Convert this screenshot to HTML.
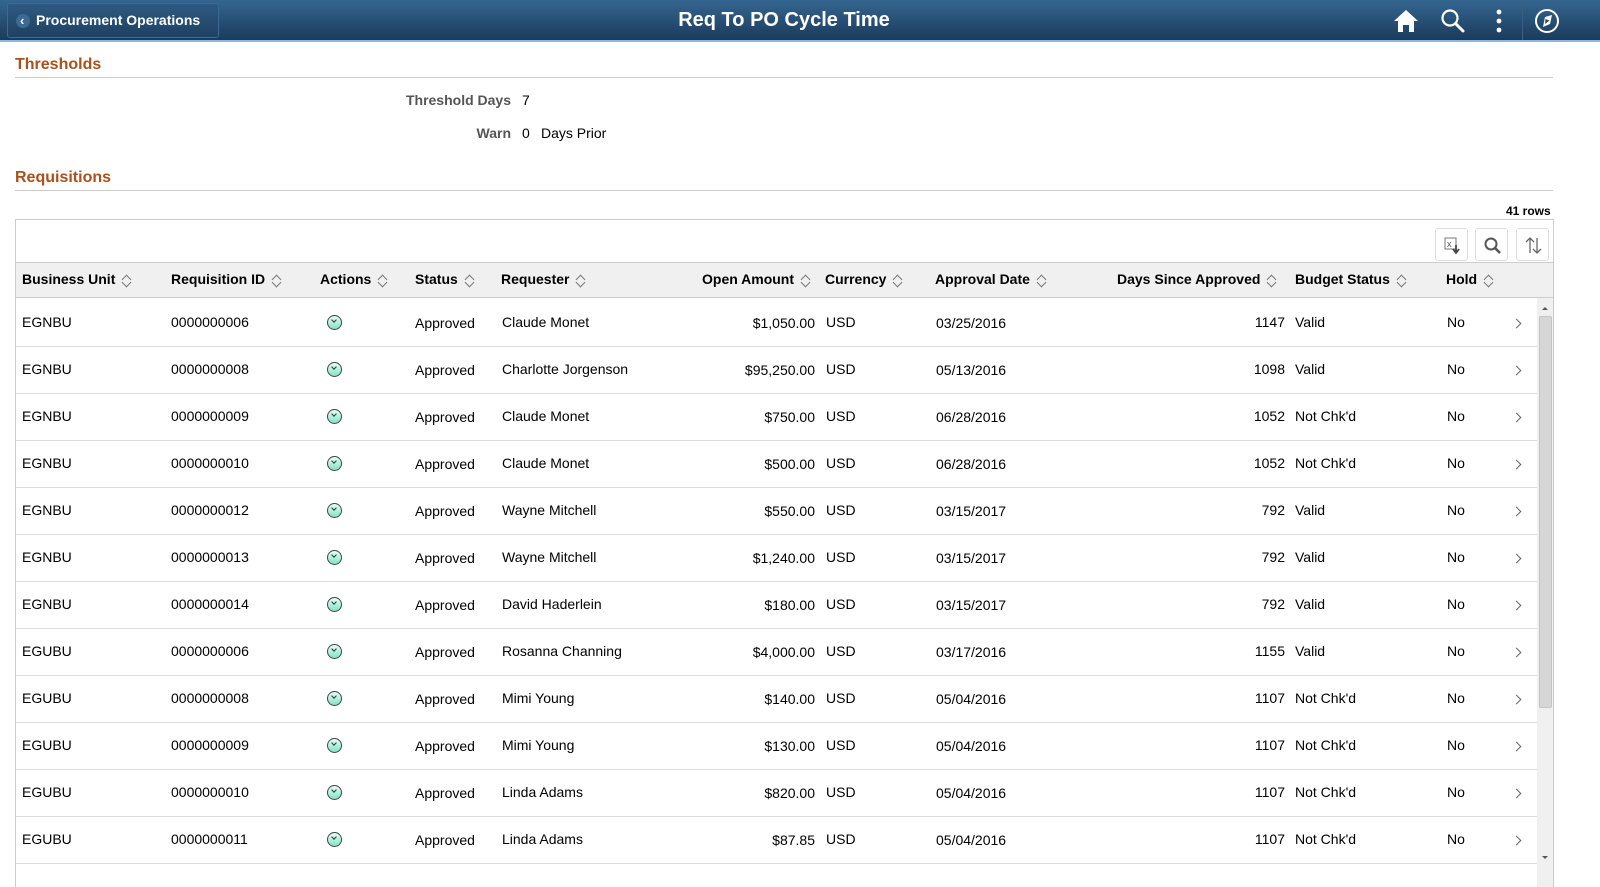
<!DOCTYPE html>
<html><head><meta charset="utf-8">
<style>
*{box-sizing:border-box;margin:0;padding:0}
body{width:1600px;height:887px;overflow:hidden;background:#fff;font-family:"Liberation Sans",Arial,sans-serif;position:relative;color:#000}
.top{position:absolute;left:0;top:0;width:1600px;height:42px;background:linear-gradient(#356690,#1b3b5c);border-bottom:2px solid #8fb8e0}
.back{position:absolute;left:7px;top:3px;width:212px;height:35px;border:1px solid #3a6a95;border-radius:3px;background:linear-gradient(#2e5a82,#1e4163);color:#fff;font-weight:bold;font-size:14px;line-height:33px;padding-left:28px}
.back .c{position:absolute;left:8px;top:10px;width:14px;height:14px;border-radius:50%;background:#3d6a93}
.title{position:absolute;left:0;width:1568px;text-align:center;top:9px;color:#fff;font-weight:bold;font-size:20px}
.sec{position:absolute;left:15px;color:#a9501c;font-weight:bold;font-size:16px}
.hr{position:absolute;left:15px;width:1538px;height:1px;background:#ccc}
.lbl{position:absolute;color:#555;font-weight:bold;font-size:14px;text-align:right}
.val{position:absolute;font-size:14px;color:#000}
.t{position:absolute;font-size:14px;white-space:nowrap}
.th{position:absolute;font-size:14px;font-weight:bold;white-space:nowrap;top:271px}
.srt{display:inline-block;width:7px;height:7px;border:1px solid #777;border-width:1px 0 0 1px;transform:rotate(45deg);margin-left:8px;position:relative;top:-1px}
.srt2{display:inline-block;width:7px;height:7px;border:1px solid #777;border-width:0 1px 1px 0;transform:rotate(45deg);margin-left:-7px;position:relative;top:2px}
.btn{position:absolute;top:228px;width:33px;height:33px;border:1px solid #ddd;border-radius:3px;background:#fff}
.ico{position:absolute;width:15px;height:15px;border-radius:50%;border:1.5px solid #444;background:linear-gradient(#e6fff6,#7fe3c6)}
.ico:after{content:"";position:absolute;left:4px;top:2px;width:3px;height:3px;border:solid #333;border-width:0 1.5px 1.5px 0;transform:rotate(45deg)}
.chev{position:absolute;width:7px;height:7px;border:solid #666;border-width:1.5px 1.5px 0 0;transform:rotate(45deg)}
</style></head><body>
<div class="top">
 <div class="back"><span class="c"></span><span style="position:absolute;left:12px;top:0;font-size:13px">&#8249;</span>Procurement Operations</div>
 <div class="title">Req To PO Cycle Time</div>
 <svg style="position:absolute;left:1393px;top:9px" width="26" height="24" viewBox="0 0 26 24"><path d="M13 1 L25 12 H21 V23 H16 V16 H10 V23 H5 V12 H1 Z" fill="#fff"/></svg>
 <svg style="position:absolute;left:1440px;top:8px" width="26" height="26" viewBox="0 0 26 26"><circle cx="10" cy="10" r="7.5" stroke="#fff" stroke-width="2.2" fill="none"/><path d="M15.5 15.5 L23 23" stroke="#fff" stroke-width="3" stroke-linecap="round"/></svg>
 <svg style="position:absolute;left:1494px;top:9px" width="10" height="24"><circle cx="5" cy="3" r="2.4" fill="#fff"/><circle cx="5" cy="12" r="2.4" fill="#fff"/><circle cx="5" cy="21" r="2.4" fill="#fff"/></svg>
 <div style="position:absolute;left:1522px;top:0;width:46px;height:40px;border-left:1px solid #3b5f82"></div>
 <svg style="position:absolute;left:1534px;top:8px" width="26" height="26" viewBox="0 0 26 26"><circle cx="13" cy="13" r="11" stroke="#fff" stroke-width="2" fill="none"/><path d="M9 19 L11 9 L18 7 L16 16 Z" fill="#fff"/><path d="M11.5 11 L15.5 12.5 L11 16 Z" fill="#254a6f"/></svg>
</div>

<div class="sec" style="top:56px">Thresholds</div>
<div class="hr" style="top:77px"></div>
<div class="lbl" style="left:380px;width:131px;top:92px">Threshold Days</div>
<div class="val" style="left:522px;top:92px">7</div>
<div class="lbl" style="left:380px;width:131px;top:125px">Warn</div>
<div class="val" style="left:522px;top:125px">0</div>
<div class="val" style="left:541px;top:125px">Days Prior</div>

<div class="sec" style="top:169px">Requisitions</div>
<div class="hr" style="top:190px"></div>
<div class="t" style="left:1506px;top:204px;font-size:12px;font-weight:bold">41 rows</div>

<div style="position:absolute;left:15px;top:219px;width:1539px;height:668px;border:1px solid #ccc;border-bottom:none"></div>
<div class="btn" style="left:1435px"><svg width="33" height="33"><rect x="9" y="9" width="11" height="11" fill="none" stroke="#777"/><text x="11" y="18" font-size="9" font-family="Liberation Sans" fill="#555">x</text><path d="M20 16 V23 M17 20 L20 24 L23 20" stroke="#444" stroke-width="1.8" fill="none"/></svg></div>
<div class="btn" style="left:1475px"><svg width="33" height="33"><circle cx="15" cy="15" r="5.5" stroke="#555" stroke-width="2" fill="none"/><path d="M19 19 L24 24" stroke="#555" stroke-width="2.5"/></svg></div>
<div class="btn" style="left:1516px"><svg width="33" height="33"><path d="M13 24 V9 M9 13 L13 9 L17 13 M20 9 V24 M16 20 L20 24 L24 20" stroke="#666" stroke-width="1.3" fill="none"/></svg></div>

<div style="position:absolute;left:16px;top:262px;width:1537px;height:36px;background:#f0f0f0;border-top:1px solid #ccc;border-bottom:1px solid #ccc"></div>
<div class="th" style="left:22px">Business Unit<span class="srt"></span><span class="srt2"></span></div>
<div class="th" style="left:171px">Requisition ID<span class="srt"></span><span class="srt2"></span></div>
<div class="th" style="left:320px">Actions<span class="srt"></span><span class="srt2"></span></div>
<div class="th" style="left:415px">Status<span class="srt"></span><span class="srt2"></span></div>
<div class="th" style="left:501px">Requester<span class="srt"></span><span class="srt2"></span></div>
<div class="th" style="left:702px">Open Amount<span class="srt"></span><span class="srt2"></span></div>
<div class="th" style="left:825px">Currency<span class="srt"></span><span class="srt2"></span></div>
<div class="th" style="left:935px">Approval Date<span class="srt"></span><span class="srt2"></span></div>
<div class="th" style="left:1117px">Days Since Approved<span class="srt"></span><span class="srt2"></span></div>
<div class="th" style="left:1295px">Budget Status<span class="srt"></span><span class="srt2"></span></div>
<div class="th" style="left:1446px">Hold<span class="srt"></span><span class="srt2"></span></div>

<div style="position:absolute;left:1537px;top:298px;width:16px;height:589px;background:#f0f0f0"></div>
<div style="position:absolute;left:1539px;top:316px;width:13px;height:392px;background:#d6d6d6;border:1px solid #c4c4c4;border-radius:2px"></div>
<div style="position:absolute;left:1542px;top:304px;width:0;height:0;border:3px solid transparent;border-bottom-color:#555"></div>
<div style="position:absolute;left:1542px;top:856px;width:0;height:0;border:3px solid transparent;border-top-color:#555"></div>

<div id="rows"></div>
<script>
var d=[["EGNBU","0000000006","Claude Monet","$1,050.00","03/25/2016","1147","Valid"],
["EGNBU","0000000008","Charlotte Jorgenson","$95,250.00","05/13/2016","1098","Valid"],
["EGNBU","0000000009","Claude Monet","$750.00","06/28/2016","1052","Not Chk'd"],
["EGNBU","0000000010","Claude Monet","$500.00","06/28/2016","1052","Not Chk'd"],
["EGNBU","0000000012","Wayne Mitchell","$550.00","03/15/2017","792","Valid"],
["EGNBU","0000000013","Wayne Mitchell","$1,240.00","03/15/2017","792","Valid"],
["EGNBU","0000000014","David Haderlein","$180.00","03/15/2017","792","Valid"],
["EGUBU","0000000006","Rosanna Channing","$4,000.00","03/17/2016","1155","Valid"],
["EGUBU","0000000008","Mimi Young","$140.00","05/04/2016","1107","Not Chk'd"],
["EGUBU","0000000009","Mimi Young","$130.00","05/04/2016","1107","Not Chk'd"],
["EGUBU","0000000010","Linda Adams","$820.00","05/04/2016","1107","Not Chk'd"],
["EGUBU","0000000011","Linda Adams","$87.85","05/04/2016","1107","Not Chk'd"]];
var h="";
d.forEach(function(r,i){
 var c=322+i*47-8; var line=346+i*47;
 h+='<div style="position:absolute;left:16px;top:'+line+'px;width:1521px;height:1px;background:#ddd"></div>';
 h+='<div class="t" style="left:22px;top:'+c+'px">'+r[0]+'</div>';
 h+='<div class="t" style="left:171px;top:'+c+'px">'+r[1]+'</div>';
 h+='<div class="ico" style="left:327px;top:'+(c+1)+'px"></div>';
 h+='<div class="t" style="left:415px;top:'+(c+1)+'px">Approved</div>';
 h+='<div class="t" style="left:502px;top:'+c+'px">'+r[2]+'</div>';
 h+='<div class="t" style="left:600px;width:215px;text-align:right;top:'+(c+1)+'px">'+r[3]+'</div>';
 h+='<div class="t" style="left:826px;top:'+c+'px">USD</div>';
 h+='<div class="t" style="left:936px;top:'+(c+1)+'px">'+r[4]+'</div>';
 h+='<div class="t" style="left:1184px;width:101px;text-align:right;top:'+c+'px">'+r[5]+'</div>';
 h+='<div class="t" style="left:1295px;top:'+c+'px">'+r[6]+'</div>';
 h+='<div class="t" style="left:1447px;top:'+c+'px">No</div>';
 h+='<div class="chev" style="left:1513px;top:'+(c+6)+'px"></div>';
});
document.getElementById("rows").innerHTML=h;
</script>
</body></html>
